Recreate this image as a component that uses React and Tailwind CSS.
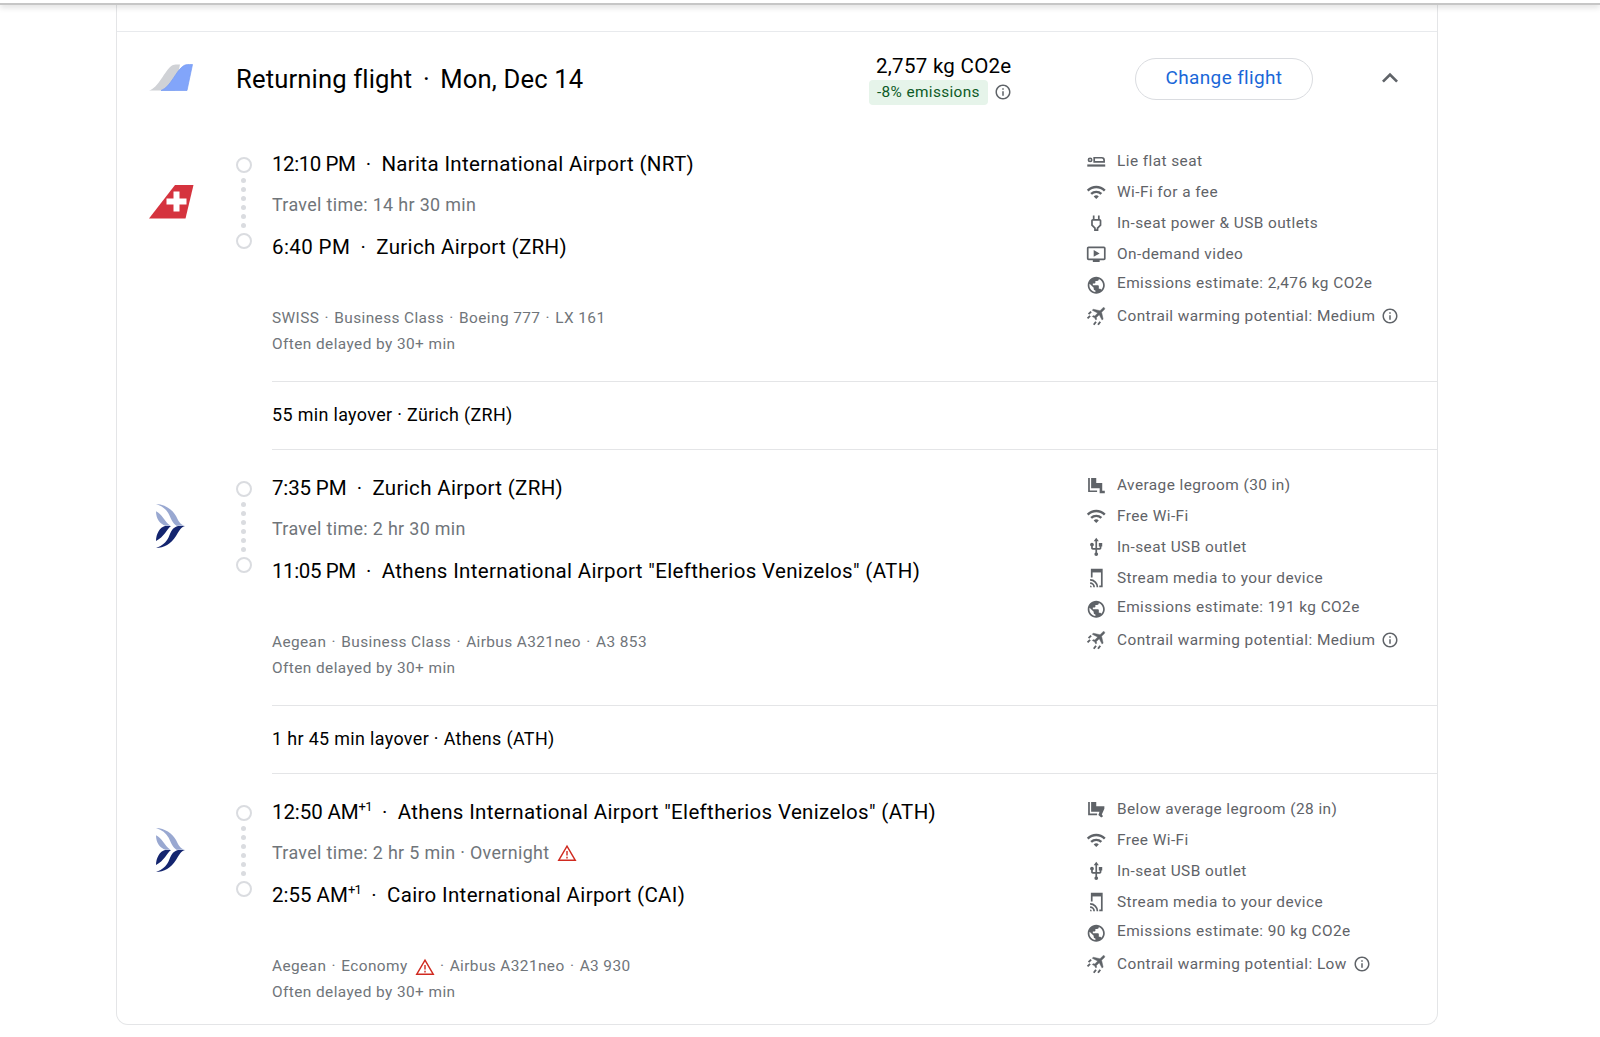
import {
  MdExpandLess,
  MdInfoOutline,
  MdOndemandVideo,
  MdOutlinePower,
  MdPublic,
  MdUsb,
  MdWifi,
} from "react-icons/md";

const legs = [
  {
    logo: "swiss",
    depart: { time: "12:10 PM", timeClass: "tracking-[-0.45px]", airport: "Narita International Airport (NRT)" },
    arrive: { time: "6:40 PM", timeClass: "tracking-[0.4px]", airport: "Zurich Airport (ZRH)" },
    travel: "Travel time: 14 hr 30 min",
    airline: "SWISS",
    cabin: "Business Class",
    plane: "Boeing 777",
    number: "LX 161",
    seat: { icon: LieFlatIcon, label: "Lie flat seat" },
    amenities: [
      { icon: MdWifi, label: "Wi-Fi for a fee" },
      { icon: MdOutlinePower, label: "In-seat power & USB outlets" },
      { icon: MdOndemandVideo, label: "On-demand video" },
    ],
    emissions: "2,476",
    contrail: "Medium",
    layover: "55 min layover · Zürich (ZRH)",
  },
  {
    logo: "aegean",
    depart: { time: "7:35 PM", timeClass: "tracking-[-0.15px]", airport: "Zurich Airport (ZRH)" },
    arrive: { time: "11:05 PM", timeClass: "tracking-[-0.4px]", airport: 'Athens International Airport "Eleftherios Venizelos" (ATH)' },
    travel: "Travel time: 2 hr 30 min",
    airline: "Aegean",
    cabin: "Business Class",
    plane: "Airbus A321neo",
    number: "A3 853",
    seat: { icon: LegroomIcon, label: "Average legroom (30 in)" },
    amenities: [
      { icon: MdWifi, label: "Free Wi-Fi" },
      { icon: MdUsb, label: "In-seat USB outlet" },
      { icon: StreamIcon, label: "Stream media to your device" },
    ],
    emissions: "191",
    contrail: "Medium",
    layover: "1 hr 45 min layover · Athens (ATH)",
  },
  {
    logo: "aegean",
    depart: { time: "12:50 AM", timeClass: "tracking-[-0.1px]", nextDay: true, airport: 'Athens International Airport "Eleftherios Venizelos" (ATH)' },
    arrive: { time: "2:55 AM", timeClass: "tracking-normal", nextDay: true, airport: "Cairo International Airport (CAI)" },
    travel: "Travel time: 2 hr 5 min · Overnight",
    overnight: true,
    airline: "Aegean",
    cabin: "Economy",
    cabinWarning: true,
    plane: "Airbus A321neo",
    number: "A3 930",
    seat: { icon: ReducedLegroomIcon, label: "Below average legroom (28 in)" },
    amenities: [
      { icon: MdWifi, label: "Free Wi-Fi" },
      { icon: MdUsb, label: "In-seat USB outlet" },
      { icon: StreamIcon, label: "Stream media to your device" },
    ],
    emissions: "90",
    contrail: "Low",
  },
];

function LieFlatIcon({ size }) {
  return (
    <svg width={size} height={size} viewBox="0 0 24 24" fill="none" stroke="currentColor" strokeWidth="2">
      <circle cx="4.8" cy="10.4" r="1.9" />
      <path d="M9.600 7.900h8.800a2.800 2.800 0 0 1 2.800 2.800v2.100H9.600z" />
      <path d="M1.500 17h21" strokeWidth="2.600" />
    </svg>
  );
}

function LegroomIcon({ size }) {
  return (
    <svg width={size} height={size} viewBox="0 0 24 24" fill="currentColor">
      <path d="M3.500 3.500v15.500H13" fill="none" stroke="currentColor" strokeWidth="2" />
      <path d="M6 3.500h6v6h7v9h3v3h-6V15.500H6z" />
    </svg>
  );
}

function ReducedLegroomIcon({ size }) {
  return (
    <svg width={size} height={size} viewBox="0 0 24 24" fill="currentColor">
      <path d="M3.500 3.500v14.500H13" fill="none" stroke="currentColor" strokeWidth="2" />
      <path d="M6 3.500h6v5h9.500v3L18.500 18l1.500 2.200-2.200 1.600-3.300-3 1.300-3.800H6z" />
    </svg>
  );
}

function StreamIcon({ size }) {
  return (
    <svg width={size} height={size} viewBox="0 0 24 24" fill="none" stroke="currentColor" strokeWidth="2">
      <path d="M6.700 11V2h11.800v19.500H15.500" />
      <path d="M6.700 3.500h11.800" strokeWidth="3.400" />
      <path d="M4.800 17.800a4.700 4.700 0 0 1 4.700 4.700M4.800 13.900a8.600 8.600 0 0 1 8.600 8.600" />
      <path d="M4.800 20.500a2 2 0 0 1 2 2h-2z" fill="currentColor" stroke="none" />
    </svg>
  );
}

function ContrailIcon({ size }) {
  return (
    <svg width={size} height={size} viewBox="0 0 24 24" fill="currentColor">
      <path
        transform="translate(15.8 8.6) rotate(45) scale(.86) translate(-12 -12)"
        d="M21 16v-2l-8-5V3.500c0-.83-.67-1.500-1.500-1.500S10 2.670 10 3.500V9l-8 5v2l8-2.500V19l-2 1.500V22l3.500-1 3.500 1v-1.500L13 19v-5.500z"
        stroke="currentColor"
        strokeWidth=".6"
      />
      <path d="M1.800 14.500l3-3M3 9.500l3-3M9.100 22l2.600-3.600M14.100 22l2.600-3.600" stroke="currentColor" strokeWidth="2.200" />
    </svg>
  );
}

function WarningIcon() {
  return (
    <svg width="20" height="18" viewBox="0 0 20 18" fill="none" stroke="#d02a20" strokeWidth="1.4">
      <path d="M10 2.200L18.300 16.300H1.700z" />
      <path d="M10 7v4.500M10 12.800v1.700" />
    </svg>
  );
}

function TailLogo() {
  return (
    <svg width="44" height="27" viewBox="0 0 44 27">
      <path d="M0 26.500C9 24.500 16 6 23 1.500 25 .3 27 .5 31 .5L26 26.500z" fill="#d0d2d6" />
      <path d="M12 26.500C22 23 27 6 35 1.500 37 .3 39 .5 43.500 .5L38 26.500z" fill="#82a5fa" stroke="#769bf3" strokeWidth=".7" />
    </svg>
  );
}

function SwissLogo() {
  return (
    <svg width="45" height="34" viewBox="0 0 45 34">
      <path d="M26 0h18.500L36.500 33.500H0z" fill="#d5333e" />
      <path d="M24.500 6.500h6v7h7v6h-7v7h-6v-7h-7v-6h7z" fill="#fff" />
    </svg>
  );
}

function AegeanLogo() {
  return (
    <svg width="29" height="44" viewBox="0 0 29 44" className="mr-0.5">
      <path d="M0 0C9 .5 16 5 20 12c2.500 5 4 8.500 9 9.700H20.500C16 19 15 14 12.500 9.500 10 5 6 2 0 0z" fill="#99a8d1" />
      <path d="M0 7.200C6 10 8 17 14.500 21.700H9.500C4 20 0 15 0 7.200z" fill="#99a8d1" />
      <path d="M29 22C25 23 23 27 20 32 15 40 8 44 0 44 7 41.500 10 38 12.500 33.500 15 28 16 23.500 22 22z" fill="#14256f" />
      <path d="M15 22C11 25 8 33 0 37 0 30 4 23 9 22z" fill="#14256f" />
    </svg>
  );
}

function Stop({ time, timeClass, nextDay, airport }) {
  return (
    <div className="flex h-[26px] items-center whitespace-pre text-[20.5px] text-black">
      <span className={timeClass}>{time}</span>
      {nextDay && <span className="-mt-2.5 text-[13px] tracking-[-0.8px]">+1</span>}
      <span className="w-[26px] text-center">·</span>
      <span className="tracking-[0.34px]">{airport}</span>
    </div>
  );
}

function Timeline() {
  return (
    <div className="flex w-4 flex-col items-center">
      <div className="size-4 rounded-full border-2 border-[#dadce0]" />
      <div className="flex h-[60px] flex-col items-center justify-center gap-1">
        {[0, 1, 2, 3, 4, 5].map((i) => (
          <div key={i} className="size-[5px] rounded-full bg-[#dadce0]" />
        ))}
      </div>
      <div className="size-4 rounded-full border-2 border-[#dadce0]" />
    </div>
  );
}

function Dot() {
  return <span className="px-[1.1px]"> · </span>;
}

function Amenity({ icon: Icon, children }) {
  return (
    <div className="flex h-[31px] items-center">
      <span className="flex w-[31px] shrink-0">
        <Icon size={20.5} />
      </span>
      {children}
    </div>
  );
}

function Leg({ leg }) {
  return (
    <div className="flex h-[256px]">
      <div className="flex h-[148px] w-[108px] shrink-0 items-center justify-center pt-[5px]">
        {leg.logo === "swiss" ? <SwissLogo /> : <AegeanLogo />}
      </div>
      <div className="ml-[10.5px] pt-[32px]">
        <Timeline />
      </div>
      <div className="ml-[20.5px] flex w-[814px] flex-col pt-[26px]">
        <Stop {...leg.depart} />
        <div className="mt-[15px] flex h-[26px] items-center gap-2 text-[17.9px] tracking-[0.34px] text-[#70757a]">
          {leg.travel}
          {leg.overnight && <WarningIcon />}
        </div>
        <div className="mt-[16px]">
          <Stop {...leg.arrive} />
        </div>
        <div className="mt-[46px] flex h-[26px] items-center whitespace-pre text-[15.4px] tracking-[0.4px] text-[#70757a]">
          {leg.airline}
          <Dot />
          {leg.cabin}
          {leg.cabinWarning && (
            <span className="ml-[7px]">
              <WarningIcon />
            </span>
          )}
          <Dot />
          {leg.plane}
          <Dot />
          {leg.number}
        </div>
        <div className="flex h-[26px] items-center text-[15.4px] tracking-[0.42px] text-[#70757a]">Often delayed by 30+ min</div>
      </div>
      <div className="flex flex-col pt-[21px] text-[15.4px] tracking-[0.43px] text-[#5f6368]">
        <Amenity icon={leg.seat.icon}>{leg.seat.label}</Amenity>
        {leg.amenities.map((a) => (
          <Amenity key={a.label} icon={a.icon}>
            {a.label}
          </Amenity>
        ))}
        <Amenity icon={MdPublic}>
          <span className="mb-[3px]">Emissions estimate: {leg.emissions} kg CO2e</span>
        </Amenity>
        <Amenity icon={ContrailIcon}>
          Contrail warming potential: {leg.contrail}
          <MdInfoOutline size={18} className="mb-px ml-[6px]" />
        </Amenity>
      </div>
    </div>
  );
}

export default function App() {
  return (
    <div className="h-[1037px] overflow-hidden bg-white font-['Roboto',sans-serif] text-black">
      <div className="relative z-10 h-[5px] border-b-2 border-[#c6c6c6] bg-white shadow-[0_2px_6px_rgba(0,0,0,0.16)]" />
      <div className="-mt-[5px] ml-[116px] h-[1025px] w-[1322px] rounded-b-xl border border-t-0 border-[#e4e5e7]">
        <div className="h-[32px] border-b border-[#e8eaed]" />
        <div className="flex h-[93px] items-center">
          <div className="mb-0.5 flex w-[107px] justify-center">
            <TailLogo />
          </div>
          <h2 className="ml-3 mt-px flex w-[633px] text-[25.6px] tracking-[0.15px]">
            Returning flight
            <span className="w-[28px] text-center">·</span>
            Mon, Dec 14
          </h2>
          <div className="mt-px flex w-[266px] flex-col">
            <div className="pl-[7px] text-[20.5px] leading-[26px] tracking-[0.28px]">2,757 kg CO2e</div>
            <div className="mt-px flex items-center">
              <span className="flex h-[25px] items-center rounded bg-[#e6f4ea] px-2 text-[15.4px] tracking-[0.36px] text-[#0d5a26]">-8% emissions</span>
              <MdInfoOutline size={18} className="mb-px ml-1.5 text-[#5f6368]" />
            </div>
          </div>
          <button className="h-[42px] w-[178px] rounded-full border border-[#dadce0] text-[19px] tracking-[0.35px] text-[#1a67d8]">Change flight</button>
          <MdExpandLess size={32} className="mb-px ml-[61px] text-[#5f6368]" />
        </div>
        {legs.map((leg) => (
          <div key={leg.number}>
            <Leg leg={leg} />
            {leg.layover && (
              <div className="-mb-px ml-[155px] flex h-[69px] items-center border-y border-[#e4e5e7] text-[17.9px] tracking-[0.36px]">{leg.layover}</div>
            )}
          </div>
        ))}
      </div>
    </div>
  );
}
